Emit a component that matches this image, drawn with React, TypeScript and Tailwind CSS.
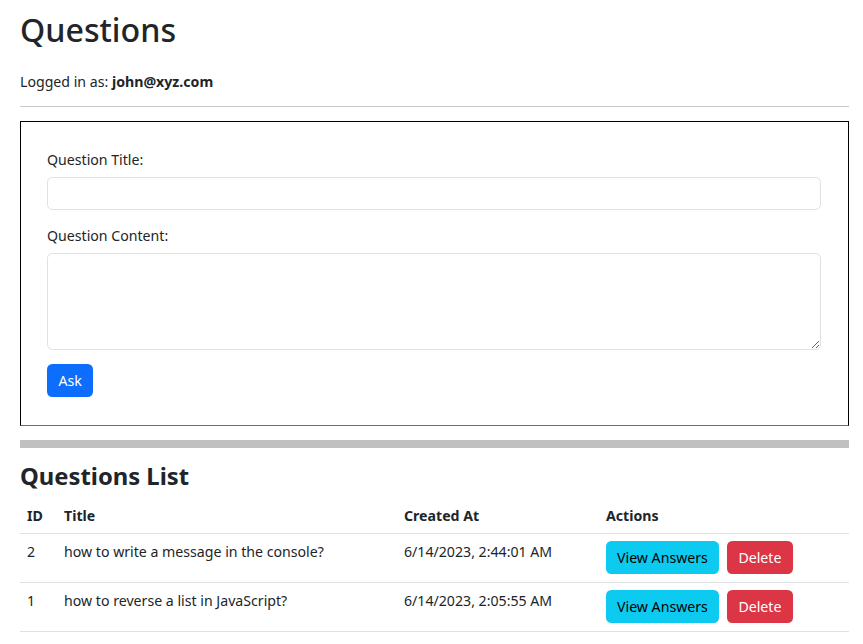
import React from 'react';

interface Question {
  id: number;
  title: string;
  createdAt: string;
}

const questions: Question[] = [
  { id: 2, title: 'how to write a message in the console?', createdAt: '6/14/2023, 2:44:01 AM' },
  { id: 1, title: 'how to reverse a list in JavaScript?', createdAt: '6/14/2023, 2:05:55 AM' },
];

export default function App() {
  return (
    <div
      className="min-h-screen bg-white pl-[20px] pr-[14px] pt-[11px] text-[14.15px] leading-[21px] text-[#212529]"
      style={{ fontFamily: '"Noto Sans", sans-serif' }}
    >
      <h1 className="text-[32.2px] leading-[38.6px] font-medium">Questions</h1>
      <p className="mt-[21px]">
        Logged in as: <strong className="font-bold">john@xyz.com</strong>
      </p>
      <hr className="my-[14px] border-t border-[#c8c9ca]" />

      {/* Ask form */}
      <form
        className="border border-black border-b-[#6b6b6b] pt-[27px] pb-[28px] pl-[26px] pr-[27px]"
        onSubmit={(e) => e.preventDefault()}
      >
        <div className="mb-[15px]">
          <label className="mb-[7px] block">Question Title:</label>
          <input
            type="text"
            className="block h-[33px] w-full rounded-[5.25px] border border-[#dee2e6] px-[10.5px] outline-none"
          />
        </div>
        <div className="mb-[14px]">
          <label className="mb-[7px] block">Question Content:</label>
          <textarea
            rows={4}
            className="block h-[97px] w-full rounded-[5.25px] border border-[#dee2e6] px-[10.5px] py-[5.25px] outline-none"
          />
        </div>
        <button
          type="submit"
          className="h-[33px] rounded-[5.25px] bg-[#0d6efd] px-[11.5px] text-white"
        >
          Ask
        </button>
      </form>

      <div className="mt-[14px] h-[8px] bg-[#c0c0c0]" />

      <h3 className="mt-[14.5px] mb-[7px] text-[23.8px] leading-[28.6px] font-bold">Questions List</h3>

      <table className="w-full border-collapse text-left">
        <thead>
          <tr className="border-b border-[#dee2e6]">
            <th className="w-[37px] p-[7px] font-bold">ID</th>
            <th className="w-[340px] p-[7px] font-bold">Title</th>
            <th className="w-[202px] p-[7px] font-bold">Created At</th>
            <th className="p-[7px] font-bold">Actions</th>
          </tr>
        </thead>
        <tbody>
          {questions.map((q) => (
            <tr key={q.id} className="border-b border-[#dee2e6]">
              <td className="px-[7px] py-[7.5px] align-top">{q.id}</td>
              <td className="px-[7px] py-[7.5px] align-top">{q.title}</td>
              <td className="px-[7px] py-[7.5px] align-top">{q.createdAt}</td>
              <td className="px-[7px] py-[7.5px] align-top">
                <div className="flex gap-[8px]">
                  <button className="h-[33px] rounded-[5.25px] bg-[#0dcaf0] px-[11px] text-black">
                    View Answers
                  </button>
                  <button className="h-[33px] rounded-[5.25px] bg-[#dc3545] px-[11.5px] text-white">
                    Delete
                  </button>
                </div>
              </td>
            </tr>
          ))}
        </tbody>
      </table>
    </div>
  );
}
